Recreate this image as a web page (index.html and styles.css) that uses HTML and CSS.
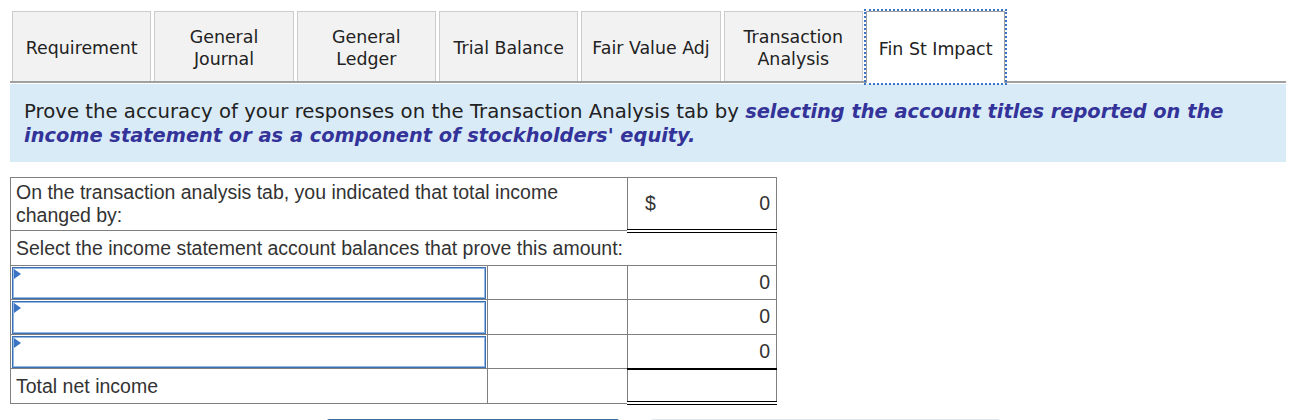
FILE: index.html
```html
<!DOCTYPE html>
<html lang="en">
<head>
<meta charset="utf-8">
<title>Fin St Impact</title>
<link rel="stylesheet" href="styles.css">
</head>
<body>
<div class="page">
  <div class="tabs">
    <div class="tab">Requirement</div>
    <div class="tab">General<br>Journal</div>
    <div class="tab">General<br>Ledger</div>
    <div class="tab">Trial Balance</div>
    <div class="tab">Fair Value Adj</div>
    <div class="tab">Transaction<br>Analysis</div>
    <div class="tab active">Fin St Impact</div>
  </div>
  <div class="instructions">Prove the accuracy of your responses on the Transaction Analysis tab by <b><i>selecting the account titles reported on the income statement or as a component of stockholders' equity.</i></b></div>
  <table class="grid">
    <colgroup>
      <col class="c-label">
      <col class="c-mid">
      <col class="c-amt">
    </colgroup>
    <tr class="r-first">
      <td colspan="2" class="txt">On the transaction analysis tab, you indicated that total income<br>changed by:</td>
      <td class="amt dbl"><span class="cur">$</span><span class="num">0</span></td>
    </tr>
    <tr>
      <td colspan="3" class="txt">Select the income statement account balances that prove this amount:</td>
    </tr>
    <tr>
      <td class="sel-cell"><div class="sel"><span class="tri"></span></div></td>
      <td></td>
      <td class="amt"><span class="num">0</span></td>
    </tr>
    <tr>
      <td class="sel-cell"><div class="sel"><span class="tri"></span></div></td>
      <td></td>
      <td class="amt"><span class="num">0</span></td>
    </tr>
    <tr>
      <td class="sel-cell"><div class="sel"><span class="tri"></span></div></td>
      <td></td>
      <td class="amt under"><span class="num">0</span></td>
    </tr>
    <tr>
      <td class="txt">Total net income</td>
      <td></td>
      <td class="amt dbl"></td>
    </tr>
  </table>
  <div class="nav">
    <div class="btn prev"></div>
    <div class="btn next"></div>
  </div>
</div>
</body>
</html>
```
FILE: styles.css
```css
html, body {
  margin: 0;
  padding: 0;
  background: #fff;
  overflow: hidden;
}
.page {
  padding: 11px 22px 0 10px;
  font-family: "DejaVu Sans", Verdana, sans-serif;
  color: #222;
}
.tabs {
  display: flex;
  gap: 3px;
  padding-left: 2px;
  border-bottom: 2px solid #a0a0a0;
  height: 70px;
}
.tab {
  width: 139.33px;
  box-sizing: border-box;
  height: 70px;
  padding-top: 2px;
  background: #f2f2f2;
  border: 1px solid #cccccc;
  border-bottom: none;
  display: flex;
  align-items: center;
  justify-content: center;
  text-align: center;
  font-size: 17.4px;
  line-height: 22px;
  color: #222;
  white-space: nowrap;
}
.tab.active {
  background: #fff;
  height: 72px;
  border-color: #a0a0a0;
  outline: 2px dotted #3b74c4;
  outline-offset: 0;
  position: relative;
}
.instructions {
  margin-top: 1px;
  background: #daebf8;
  padding: 16px 14px 14px 14px;
  font-size: 19.7px;
  line-height: 24px;
  color: #222;
}
.instructions b {
  color: #333399;
  font-size: 19.4px;
}
.grid {
  margin-top: 15px;
  border-collapse: collapse;
  font-family: "Liberation Sans", Arial, sans-serif;
  font-size: 19.5px;
  color: #333;
}
.c-label { width: 477px; }
.c-mid { width: 140px; }
.c-amt { width: 149px; }
.grid td {
  border: 1px solid #808080;
  padding: 0;
  height: 34.6px;
  box-sizing: border-box;
}
.grid td.txt {
  padding: 2px 5px 2px 5px;
  line-height: 23px;
}
.r-first td { height: 53px; }
.grid td.amt {
  padding: 0 6px 0 17px;
  line-height: 23px;
}
.num {
  float: right;
}
.grid td.dbl {
  border-bottom: 4px double #000;
}
.grid td.under {
  border-bottom: 2px solid #000;
}
.grid td.sel-cell {
  padding: 1px 1px 0 1px;
}
.sel {
  position: relative;
  height: 32.6px;
  box-sizing: border-box;
  border: 1px solid #3c70b3;
  box-shadow: inset 0 0 0 1px #94b8e4;
}
.tri {
  position: absolute;
  left: 1px;
  top: 1px;
  width: 0;
  height: 0;
  border-top: 5px solid transparent;
  border-bottom: 5px solid transparent;
  border-left: 7px solid #3c74c4;
}
.nav {
  display: flex;
  gap: 32px;
  margin-top: 14px;
  padding-left: 317px;
}
.btn {
  height: 30px;
  border-radius: 2px;
}
.prev {
  width: 292px;
  background: #3b6ea5;
}
.next {
  width: 349px;
  background: #dfe7ec;
}
```
